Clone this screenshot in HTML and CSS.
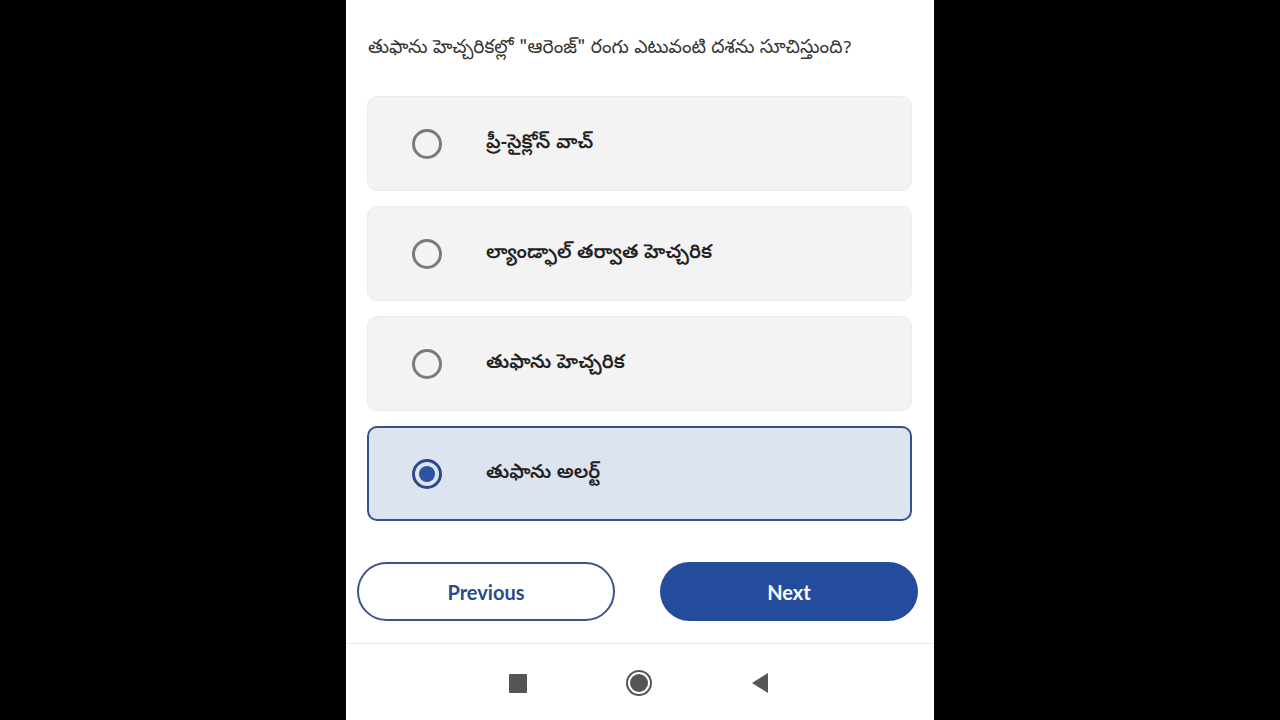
FILE: index.html
```html
<!DOCTYPE html>
<html lang="te">
<head>
    <meta charset="UTF-8">
    <meta name="viewport" content="width=device-width, initial-scale=1.0">
    <title>Quiz</title>
    <link rel="stylesheet" href="styles.css">
</head>
<body>

    <div class="phone">
        <div class="quiz">
            <p class="question">తుఫాను హెచ్చరికల్లో "ఆరెంజ్" రంగు ఎటువంటి దశను సూచిస్తుంది?</p>

            <div class="options">
                <div class="option">
                    <span class="radio"></span>
                    <span class="label">ప్రీ-సైక్లోన్ వాచ్</span>
                </div>
                <div class="option">
                    <span class="radio"></span>
                    <span class="label">ల్యాండ్ఫాల్ తర్వాత హెచ్చరిక</span>
                </div>
                <div class="option">
                    <span class="radio"></span>
                    <span class="label">తుఫాను హెచ్చరిక</span>
                </div>
                <div class="option selected">
                    <span class="radio"></span>
                    <span class="label">తుఫాను అలర్ట్</span>
                </div>
            </div>

            <div class="actions">
                <button class="btn btn-outline">Previous</button>
                <button class="btn btn-fill">Next</button>
            </div>
        </div>

        <!-- Android navigation bar -->
        <div class="navbar">
            <span class="nav-slot"><span class="nav-square"></span></span>
            <span class="nav-slot"><span class="nav-home"></span></span>
            <span class="nav-slot">
                <svg width="18" height="22" viewBox="0 0 18 22">
                    <path d="M17 1 L17 21 L1 11 Z" fill="#555"/>
                </svg>
            </span>
        </div>
    </div>

</body>
</html>
```

FILE: styles.css
```css
body {
    margin: 0;
    height: 100vh;
    background-color: #000;
    display: flex;
    justify-content: center;
    font-family: "Noto Sans Telugu", "Noto Sans", "Open Sans", sans-serif;
}

.phone {
    width: 588px;
    height: 720px;
    background-color: #fff;
    display: flex;
    flex-direction: column;
}

.quiz {
    flex: 1;
    padding: 0 16px 0 11px;
    display: flex;
    flex-direction: column;
}

.question {
    margin: 36px 0 0 11px;
    font-size: 18.8px;
    line-height: 28px;
    color: #333;
}

.options {
    margin: 32px 6px 0 10px;
    display: flex;
    flex-direction: column;
    gap: 15px;
}

/* Answer cards */
.option {
    height: 95px;
    box-sizing: border-box;
    background-color: #f3f3f3;
    border: 1px solid #ececec;
    border-radius: 10px;
    display: flex;
    align-items: center;
    padding-left: 44px;
}

.option.selected {
    background-color: #dce4f0;
    border: 2px solid #34518e;
    padding-left: 43px;
}

.radio {
    width: 30px;
    height: 30px;
    box-sizing: border-box;
    border: 3px solid #7a7a7a;
    border-radius: 50%;
    display: flex;
    align-items: center;
    justify-content: center;
}

.selected .radio {
    border-color: #2b4a8c;
}

.selected .radio::after {
    content: "";
    width: 16px;
    height: 16px;
    border-radius: 50%;
    background-color: #2d52a3;
}

.label {
    margin-left: 44px;
    font-size: 19.5px;
    font-weight: 600;
    color: #222;
}

/* Previous / Next */
.actions {
    margin-top: 41px;
    display: flex;
    justify-content: space-between;
}

.btn {
    width: 258px;
    height: 59px;
    border-radius: 30px;
    font-family: Lato, "Open Sans", sans-serif;
    font-size: 20px;
    font-weight: 700;
    cursor: pointer;
}

.btn-outline {
    background-color: #fff;
    border: 2px solid #3d5488;
    color: #2a4a8a;
}

.btn-fill {
    background-color: #234c9c;
    border: none;
    color: #fff;
}

.navbar {
    height: 74px;
    border-top: 1px solid #ececec;
    display: grid;
    grid-template-columns: repeat(3, 121px);
    justify-content: center;
    align-items: center;
    padding: 2px 2px 0 0;
}

.nav-slot {
    display: flex;
    justify-content: center;
    align-items: center;
}

.nav-square {
    width: 18px;
    height: 19px;
    background-color: #555;
    border-radius: 1px;
}

.nav-home {
    width: 18px;
    height: 18px;
    border-radius: 50%;
    background-color: #555;
    box-shadow: 0 0 0 2px #fff, 0 0 0 4px #555;
}
```
